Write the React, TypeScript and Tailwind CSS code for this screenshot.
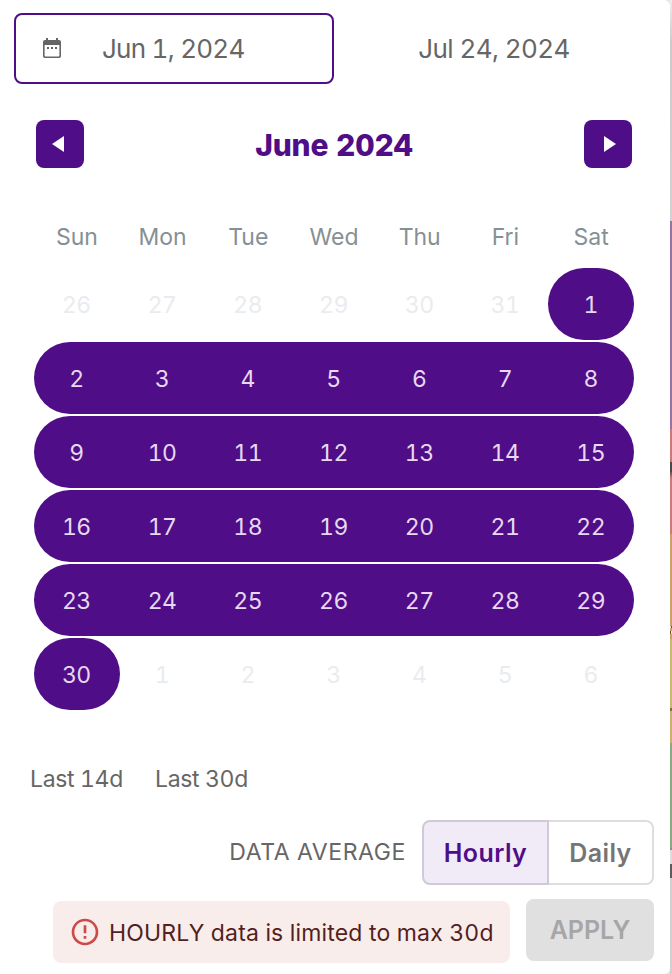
import React from "react";

const WEEKDAYS = ["Sun", "Mon", "Tue", "Wed", "Thu", "Fri", "Sat"];

type Day = { n: number; on: boolean };

const DAYS: Day[] = [
  ...[26, 27, 28, 29, 30, 31].map((n) => ({ n, on: false })),
  ...Array.from({ length: 30 }, (_, i) => ({ n: i + 1, on: true })),
  ...[1, 2, 3, 4, 5, 6].map((n) => ({ n, on: false })),
];

const WEEKS = [0, 1, 2, 3, 4, 5].map((w) => DAYS.slice(w * 7, w * 7 + 7));

function dayClass(week: Day[], i: number) {
  const day = week[i];
  if (!day.on) return "text-[#e9ecef]";
  const start = i === 0 || !week[i - 1].on;
  const end = i === 6 || !week[i + 1].on;
  const base = "bg-[#4f0e87] text-[#e6d9f0]";
  if (start && end) return base + " rounded-[36px]";
  if (start) return base + " rounded-l-[36px]";
  if (end) return base + " rounded-r-[36px]";
  return base;
}

/* Sliver of the chart that shows beyond the panel's right edge */
function ChartEdge() {
  return (
    <div className="flex w-[2px] shrink-0 flex-col">
      <div className="h-[221px] bg-linear-to-b from-[#ececec] via-[#cbcbcb] via-20% to-[#d2d2d2]" />
      <div className="h-[208px] bg-[#9a70a7]" />
      <div className="h-[33px] bg-[#c97a78]" />
      <div className="h-[10px] bg-[#4a4a4a]" />
      <div className="h-[6px] bg-linear-to-b from-[#6a4a4a] to-[#c97a7c]" />
      <div className="h-[56px] bg-[#c97a7c]" />
      <div className="h-[92px] bg-[#cba069]" />
      <div className="ml-px h-[2px] bg-[#5d503f]" />
      <div className="h-[3px] bg-[#cba069]" />
      <div className="h-[3px] w-px bg-[#5d503f]" />
      <div className="h-[5px] bg-[#cba069]" />
      <div className="h-[69px] bg-[#cdb670]" />
      <div className="h-[3px] bg-[#77704f]" />
      <div className="h-[32px] bg-[#cdb06e]" />
      <div className="h-[105px] bg-[#86aa84]" />
      <div className="h-[2px] bg-[#8c8c8c]" />
      <div className="h-[14px] bg-[#dcdcdc]" />
      <div className="h-[14px] bg-[#5c5c5c]" />
      <div className="grow bg-[#d0d0d0]" />
    </div>
  );
}

export default function App() {
  return (
    <div className="flex h-[974px] w-[672px] overflow-hidden bg-[#e6e6e6] font-['Inter','Liberation_Sans',sans-serif] text-[#666666] tabular-nums">
      <main className="flex w-[670px] shrink-0 flex-col rounded-r-[6px] bg-white">
        <div className="mt-[13px] flex h-[71px] pl-[14px]">
          <div className="flex w-[320px] items-center rounded-[8px] border-2 border-[#4f0e87] pl-[27px]">
            <svg className="-mt-px h-5 w-[18px]" viewBox="0 0 18 20" fill="#666666">
              <path
                fillRule="evenodd"
                d="M3 0h2v2h8V0h2v2h1a2 2 0 0 1 2 2v14a2 2 0 0 1-2 2H2a2 2 0 0 1-2-2V4a2 2 0 0 1 2-2h1zM1.600 7v10.600a.8.800 0 0 0 .8.800h13.200a.8.800 0 0 0 .8-.8V7zM4 9h2v2H4zM8 9h2v2H8zM12 9h2v2h-2z"
              />
            </svg>
            <span className="pl-[41px] text-[26px] tracking-[-0.75px] whitespace-nowrap">Jun 1, 2024</span>
          </div>
          <div className="flex w-[320px] items-center justify-center text-[26px] tracking-[-0.6px] whitespace-nowrap">
            Jul 24, 2024
          </div>
        </div>

        <div className="mt-9 ml-9 flex h-12 w-[596px] items-center justify-between">
          <button className="flex size-12 items-center justify-center rounded-[8px] bg-[#4f0e87] pr-1">
            <svg className="h-4 w-3" viewBox="0 0 12 16" fill="white"><path d="M12 0v16L0 8z" /></svg>
          </button>
          <h2 className="pt-[2px] text-[30px] font-extrabold tracking-[-0.2px] whitespace-nowrap text-[#4f0e87]">June 2024</h2>
          <button className="flex size-12 items-center justify-center rounded-[8px] bg-[#4f0e87] pl-1">
            <svg className="h-4 w-3" viewBox="0 0 12 16" fill="white"><path d="M0 0v16l12-8z" /></svg>
          </button>
        </div>

        <div className="mt-[51px] ml-[34px] grid h-9 w-[600px] grid-cols-7 items-center text-center text-[23px] text-[#859095]">
          {WEEKDAYS.map((d) => (
            <span key={d}>{d}</span>
          ))}
        </div>

        <div className="mt-[13px] ml-[34px] flex w-[600px] flex-col gap-[2px] text-[23px]">
          {WEEKS.map((week, w) => (
            <div key={w} className="grid h-[72px] grid-cols-7">
              {week.map((day, i) => (
                <div key={i} className={"flex items-center justify-center pt-[2px] pr-px tracking-[-0.5px] " + dayClass(week, i)}>
                  {day.n}
                </div>
              ))}
            </div>
          ))}
        </div>

        <div className="mt-[51px] ml-[30px] flex h-9 items-center text-[23px] tracking-[-0.35px] whitespace-nowrap">
          <span className="w-[125px]">Last 14d</span>
          <span>Last 30d</span>
        </div>

        <div className="mt-[23px] mr-4 flex h-[65px] items-center justify-end">
          <span className="mr-[16px] text-[23px] tracking-[0.6px] whitespace-nowrap">DATA AVERAGE</span>
          <div className="flex h-full w-[232px] text-[25px] font-semibold">
            <div className="flex w-[127px] items-center justify-center rounded-l-[8px] border-2 border-[#cfc9d8] bg-[#f1eaf7] pt-[2px] tracking-[0.4px] text-[#4f0e87]">
              Hourly
            </div>
            <div className="flex w-[105px] items-center justify-center rounded-r-[8px] border-2 border-l-0 border-[#dedede] pt-[2px] tracking-[0.4px] text-[#757575]">
              Daily
            </div>
          </div>
        </div>

        <div className="mt-[14px] mr-4 flex h-[64px] justify-end gap-4">
          <div className="mt-[2px] flex h-[62px] w-[457px] items-center rounded-[8px] bg-[#f9edeb] pl-4">
            <svg className="size-8" viewBox="0 0 24 24" fill="#cd4b47">
              <path d="M11 15h2v2h-2zm0-8h2v6h-2zm.99-5C6.47 2 2 6.48 2 12s4.47 10 9.99 10C17.52 22 22 17.52 22 12S17.52 2 11.99 2zM12 20c-4.42 0-8-3.58-8-8s3.58-8 8-8 8 3.58 8 8-3.58 8-8 8z" />
            </svg>
            <span className="pt-[2px] pl-2 text-[23px] tracking-[0.17px] whitespace-nowrap text-[#541f1e]">HOURLY data is limited to max 30d</span>
          </div>
          <button className="h-[62px] w-32 rounded-[8px] bg-[#e0e0e0] pt-[2px] text-[25px] font-semibold text-[#a6a6a6]">APPLY</button>
        </div>
      </main>
      <ChartEdge />
    </div>
  );
}
